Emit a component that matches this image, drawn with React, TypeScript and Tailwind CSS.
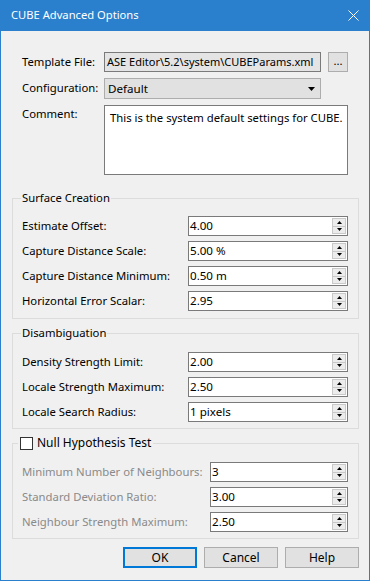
import React from 'react'

const font = { fontFamily: '"Noto Sans", "Segoe UI", sans-serif' }

function SpinInput({ value, wide }: { value: string; wide?: boolean }) {
  return (
    <div
      className={`flex h-[20px] items-stretch border border-[#7a7a7a] bg-white ${wide ? 'w-[160px]' : 'w-[138px]'}`}
    >
      <div className="flex flex-1 items-center overflow-hidden whitespace-nowrap pl-[1px] text-[11.6px] leading-none">{value}</div>
      <div className="my-[1px] mr-[1px] flex w-[14px] flex-col">
        <div className="flex flex-1 items-center justify-center border border-[#c9c9c9] bg-[#ececec]">
          <svg width="5" height="3" viewBox="0 0 5 3">
            <path d="M2.5 0 L5 3 L0 3 Z" fill="#000" />
          </svg>
        </div>
        <div className="flex flex-1 items-center justify-center border border-t-0 border-[#c9c9c9] bg-[#ececec]">
          <svg width="5" height="3" viewBox="0 0 5 3">
            <path d="M0 0 L5 0 L2.5 3 Z" fill="#000" />
          </svg>
        </div>
      </div>
    </div>
  )
}

function Row({ label, value, disabled, wide = true }: { label: string; value: string; disabled?: boolean; wide?: boolean }) {
  return (
    <div className="flex h-[20px] items-center justify-between">
      <span className={`whitespace-nowrap ${disabled ? 'text-[#8a8a8a]' : 'text-black'}`}>{label}</span>
      <SpinInput value={value} wide={wide} />
    </div>
  )
}

export default function App() {
  return (
    <div
      className="flex h-[581px] w-[370px] flex-col border-x border-b border-[#2b80cd] bg-[#f0f0f0] text-[11.3px] text-black"
      style={font}
    >
      <div className="flex h-[31px] shrink-0 items-center justify-between bg-[#2b80cd] pl-[10px] pr-[10px] text-[11.2px] text-white">
        <span>CUBE Advanced Options</span>
        <svg width="11" height="11" viewBox="0 0 11 11">
          <path d="M0.5 0.5 L10.5 10.5 M10.5 0.5 L0.5 10.5" stroke="#fff" strokeWidth="1" />
        </svg>
      </div>

      <div className="flex flex-col pl-[21px]">
        <div className="mt-[21px] flex h-[20px] items-center">
          <span className="w-[82px] whitespace-nowrap">Template File:</span>
          <div className="flex h-[20px] w-[217px] items-center overflow-hidden whitespace-nowrap border border-[#7a7a7a] bg-[#e4e4e4] pl-[2px] text-[11px]">
            ASE Editor\5.2\system\CUBEParams.xml
          </div>
          <button className="ml-[7px] flex h-[20px] w-[20px] items-center justify-center border border-[#adadad] bg-[#e1e1e1] pb-[3px] leading-none">
            ...
          </button>
        </div>

        <div className="mt-[6px] flex h-[21px] items-center">
          <span className="w-[82px] whitespace-nowrap">Configuration:</span>
          <div className="flex h-[21px] w-[217px] items-center justify-between border border-[#adadad] bg-[#e1e1e1] pl-[3px] pr-[5px] text-[11.6px]">
            <span>Default</span>
            <svg width="7" height="4" viewBox="0 0 7 4">
              <path d="M0 0 L7 0 L3.5 4 Z" fill="#000" />
            </svg>
          </div>
        </div>

        <div className="mt-[6px] flex">
          <span className="w-[82px] pt-[1px]">Comment:</span>
          <div className="h-[70px] w-[244px] whitespace-nowrap border border-[#7a7a7a] bg-white px-[5px] pt-[4px]">
            This is the system default settings for CUBE.
          </div>
        </div>
      </div>

      <div className="ml-[11px] mt-[23px] w-[347px] border border-[#dcdcdc] pb-[7px] pl-[9px] pr-[10px]">
        <div className="-ml-[1px] -mt-[9px] h-[16px] w-fit bg-[#f0f0f0] px-[1px] leading-[16px]">Surface Creation</div>
        <div className="mt-[10px] flex flex-col gap-[5px]">
          <Row label="Estimate Offset:" value="4.00" />
          <Row label="Capture Distance Scale:" value="5.00 %" />
          <Row label="Capture Distance Minimum:" value="0.50 m" />
          <Row label="Horizontal Error Scalar:" value="2.95" />
        </div>
      </div>

      <div className="ml-[11px] mt-[14px] w-[347px] border border-[#dcdcdc] pb-[6px] pl-[9px] pr-[10px]">
        <div className="-ml-[1px] -mt-[9px] h-[16px] w-fit bg-[#f0f0f0] px-[1px] leading-[16px]">Disambiguation</div>
        <div className="mt-[11px] flex flex-col gap-[5px]">
          <Row label="Density Strength Limit:" value="2.00" />
          <Row label="Locale Strength Maximum:" value="2.50" />
          <Row label="Locale Search Radius:" value="1 pixels" />
        </div>
      </div>

      <div className="ml-[11px] mt-[14px] w-[347px] border border-[#dcdcdc] pb-[6px] pl-[9px] pr-[10px]">
        <div className="-ml-[4px] -mt-[9px] flex h-[16px] w-fit items-center gap-[4px] bg-[#f0f0f0] px-[2px] leading-[16px]">
          <span className="h-[13px] w-[13px] border border-[#333] bg-white" />
          <span className="whitespace-nowrap text-[12px]">Null Hypothesis Test</span>
        </div>
        <div className="mt-[11px] flex flex-col gap-[5px]">
          <Row label="Minimum Number of Neighbours:" value="3" disabled wide={false} />
          <Row label="Standard Deviation Ratio:" value="3.00" disabled wide={false} />
          <Row label="Neighbour Strength Maximum:" value="2.50" disabled wide={false} />
        </div>
      </div>

      <div className="mt-[8px] flex justify-end gap-[7px] pr-[10px]">
        <button className="h-[21px] w-[74px] border-2 border-[#0078d7] bg-[#e1e1e1] text-[12px]">OK</button>
        <button className="h-[21px] w-[74px] border border-[#adadad] bg-[#e1e1e1] text-[12px]">Cancel</button>
        <button className="h-[21px] w-[74px] border border-[#adadad] bg-[#e1e1e1] text-[12px]">Help</button>
      </div>
    </div>
  )
}
